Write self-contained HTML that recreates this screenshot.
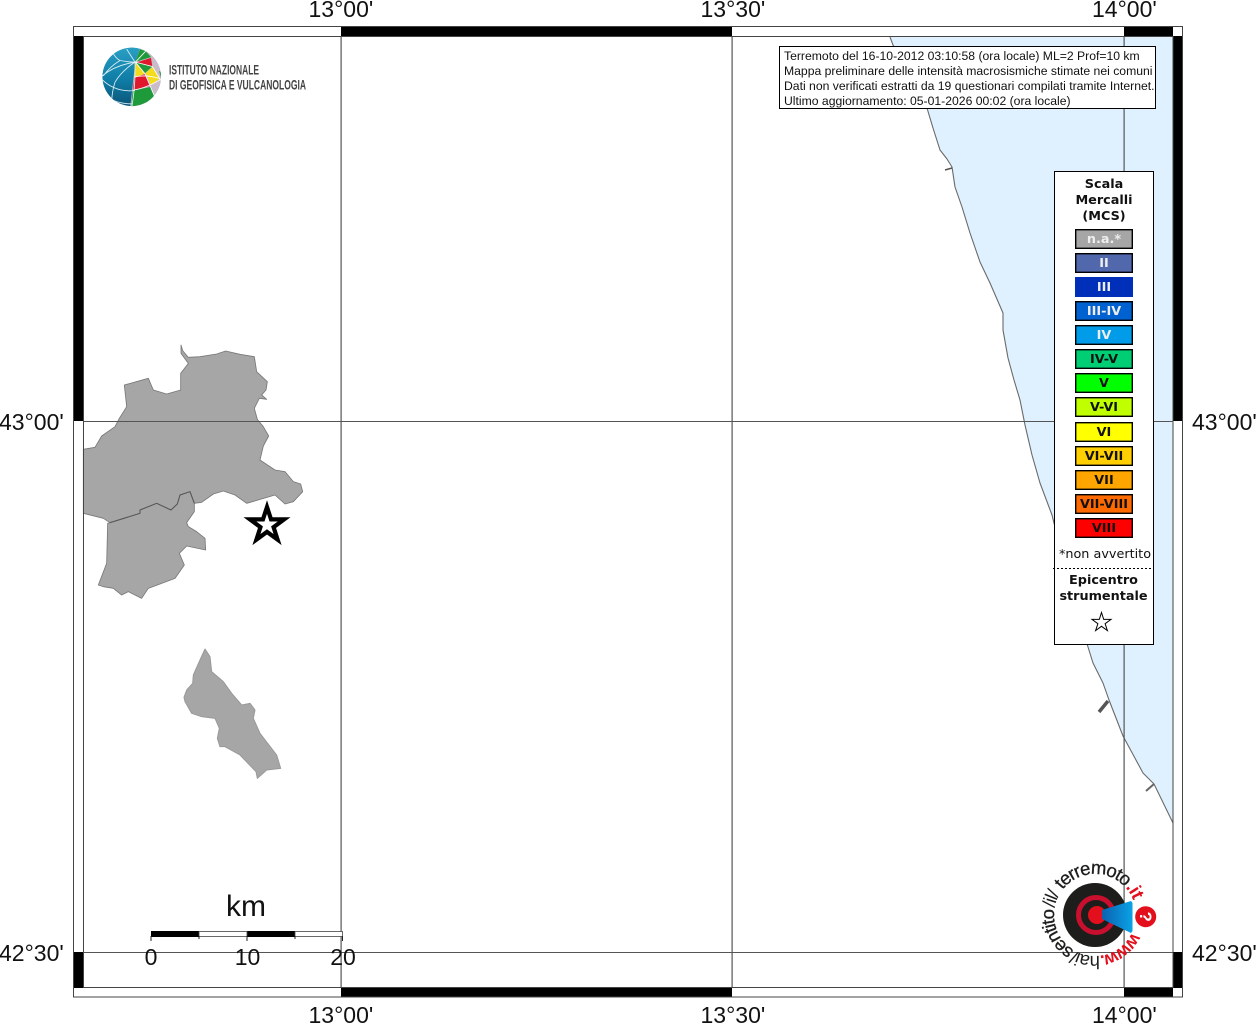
<!DOCTYPE html>
<html><head><meta charset="utf-8"><style>
html,body{margin:0;padding:0;background:#fff;width:1256px;height:1024px;overflow:hidden}
svg{display:block}
.t{font-family:"Liberation Sans",sans-serif;font-size:23px;fill:#111}
.b{font-family:"Liberation Sans",sans-serif;font-size:12.2px;fill:#111}
.d{font-family:"DejaVu Sans",sans-serif;font-size:12.8px;text-anchor:middle;fill:#111}
.h{font-weight:bold}
.s{font-family:"DejaVu Sans",sans-serif;font-size:12.8px;font-weight:bold;text-anchor:middle}
.l{font-family:"Liberation Sans",sans-serif;font-size:18.5px;letter-spacing:-1px;fill:#1d1d1b}
</style></head><body>
<svg width="1256" height="1024" viewBox="0 0 1256 1024" xmlns="http://www.w3.org/2000/svg">
<defs>
<clipPath id="tb"><rect x="780" y="47" width="375" height="61"/></clipPath>
<clipPath id="gl"><circle cx="110" cy="103" r="88"/></clipPath>
<linearGradient id="bg" x1="0" y1="0" x2="0" y2="1"><stop offset="0" stop-color="#2a9fc4"/><stop offset=".55" stop-color="#0f7da6"/><stop offset="1" stop-color="#0a5578"/></linearGradient>
<linearGradient id="cone" x1="0" y1="0" x2="1" y2="0"><stop offset="0" stop-color="#0a62b0"/><stop offset="1" stop-color="#0aa2e6"/></linearGradient>
<path id="arc" d="M1133.5 929A41 41 0 1 1 1134.6 904.4"/>
</defs>

<!-- sea -->
<polygon fill="#dff1ff" stroke="none" points="890,37 893,45 927,108 933,128 940,150 947,159 952,167 955,187 962,207 970,233 980,262 990,283 1003,313 1003,330 1008,358 1014,380 1020,400 1025,425 1032,455 1040,483 1052,515 1062,555 1075,605 1088,647 1093,663 1103,683 1109,700 1123,736 1143,773 1154,784 1173,823 1173,37"/>
<polyline fill="none" stroke="#6a6a6a" stroke-width="1.1" stroke-linejoin="round" points="890,37 893,45 927,108 933,128 940,150 947,159 952,167 955,187 962,207 970,233 980,262 990,283 1003,313 1003,330 1008,358 1014,380 1020,400 1025,425 1032,455 1040,483 1052,515 1062,555 1075,605 1088,647 1093,663 1103,683 1109,700 1123,736 1143,773 1154,784 1173,823"/>
<path d="M952 168L945 170" stroke="#555" stroke-width="1.5" fill="none"/>
<path d="M1108 701L1099 712" stroke="#555" stroke-width="3.5" fill="none"/>
<path d="M1154 784L1146 791" stroke="#666" stroke-width="2" fill="none"/>

<!-- land -->
<g transform="translate(60 330) scale(.33333)" fill="#a6a6a6" stroke="#777" stroke-width="2.5" stroke-linejoin="round">
<polygon points="363,45 368,62 385,82 420,80 470,72 497,63 540,73 583,80 590,125 622,155 618,180 605,195 620,208 598,205 583,235 592,268 610,290 626,318 610,348 600,390 645,420 675,425 700,455 722,462 728,485 700,515 675,522 645,495 560,520 525,495 490,483 460,492 425,517 403,520 390,485 360,495 352,522 333,540 290,520 240,540 240,550 150,578 130,565 70,550 70,358 105,352 125,318 165,290 178,265 200,230 193,165 265,145 280,180 320,192 362,180 362,130 385,100 363,70"/>
<polygon points="403,520 390,485 360,495 352,522 333,540 290,520 240,540 240,550 150,578 143,580 140,700 115,765 130,770 160,775 185,795 205,785 245,805 265,775 345,745 373,705 358,670 380,648 437,660 435,625 410,605 385,590 380,578 403,545"/>
<polyline fill="none" stroke="#555" stroke-width="3" points="403,520 390,485 360,495 352,522 333,540 290,520 240,540 240,550 150,578"/>
</g>
<g transform="translate(160 640) scale(.33333)" fill="#a6a6a6" stroke="#999" stroke-width="3" stroke-linejoin="round">
<polygon points="135,27 150,50 155,95 190,125 215,160 245,195 270,190 285,210 280,235 300,280 350,345 362,385 320,390 292,415 288,395 240,345 195,320 180,320 172,295 178,265 165,235 125,230 95,220 75,185 72,172 80,150 98,130 100,105 120,60"/>
</g>

<!-- grid -->
<g fill="#555">
<rect x="340.5" y="36" width="1.2" height="951"/>
<rect x="731.5" y="36" width="1.2" height="951"/>
<rect x="1123.5" y="36" width="1.2" height="951"/>
<rect x="83" y="421" width="1090" height="1"/>
<rect x="83" y="952" width="1090" height="1"/>
</g>

<!-- frame -->
<g fill="#000">
<rect x="341" y="27" width="391" height="9"/>
<rect x="1124" y="27" width="49" height="9"/>
<rect x="341" y="988" width="391" height="9"/>
<rect x="1124" y="988" width="49" height="9"/>
<rect x="74" y="36" width="9" height="385"/>
<rect x="74" y="952" width="9" height="36"/>
<rect x="1173" y="36" width="10" height="385"/>
<rect x="1173" y="952" width="10" height="36"/>
</g>
<g fill="none" stroke="#444" stroke-width="1">
<rect x="73.5" y="26.5" width="1109" height="970.5"/>
<rect x="83.5" y="36.5" width="1089.5" height="951"/>
</g>

<!-- tick labels -->
<text class="t" x="308.5" y="17">13°00'</text>
<text class="t" x="700.5" y="17">13°30'</text>
<text class="t" x="1092" y="17">14°00'</text>
<text class="t" x="308.5" y="1023">13°00'</text>
<text class="t" x="700.5" y="1023">13°30'</text>
<text class="t" x="1092" y="1023">14°00'</text>
<text class="t" x="-1" y="430">43°00'</text>
<text class="t" x="-1" y="961">42°30'</text>
<text class="t" x="1192" y="430">43°00'</text>
<text class="t" x="1192" y="961">42°30'</text>

<!-- star -->
<polygon fill="#fff" stroke="#000" stroke-width="4.2" stroke-miterlimit="10" points="267,507 271.05,519.4 284.1,519.4 273.56,527.13 277.6,539.6 267,531.9 256.4,539.6 260.44,527.13 249.9,519.4 262.95,519.4"/>

<!-- scale -->
<text x="226" y="916" font-family="Liberation Sans,sans-serif" font-size="30" fill="#111">km</text>
<rect x="151" y="931" width="48" height="6" fill="#000"/>
<rect x="247" y="931" width="48" height="6" fill="#000"/>
<rect x="199" y="931.5" width="48" height="5" fill="#fff" stroke="#444" stroke-width=".8"/>
<rect x="295" y="931.5" width="47.5" height="5" fill="#fff" stroke="#444" stroke-width=".8"/>
<path d="M151 936V941M199 936V939M247 936V941M295 936V939M342.5 936V941" stroke="#222" stroke-width="1" fill="none"/>
<g font-family="Liberation Sans,sans-serif" font-size="23" fill="#111" text-anchor="middle">
<text x="151" y="965">0</text><text x="247.5" y="965">10</text><text x="343" y="965">20</text>
</g>

<!-- INGV logo -->
<g transform="translate(95 42.5) scale(.33333)">
<g clip-path="url(#gl)">
<circle cx="110" cy="103" r="88" fill="url(#bg)"/>
<polygon points="121,58 135,18 210,18 210,200 105,200 116,102" fill="#c9bccb"/>
<polygon points="121,58 135,20 152,26 168,44" fill="#1f9a3a"/>
<polygon points="124,60 168,46 172,72 152,66" fill="#e0182d"/>
<polygon points="124,60 152,66 172,72 150,92" fill="#1f9a3a"/>
<polygon points="120,60 150,94 118,104" fill="#f3dc1a"/>
<polygon points="152,92 172,74 194,108 168,128" fill="#f3dc1a"/>
<polygon points="118,105 150,95 167,130 114,142" fill="#e0182d"/>
<polygon points="113,144 167,133 178,160 165,178 108,200" fill="#1f9a3a"/>
<polygon points="178,160 188,150 182,178" fill="#e0182d"/>
<polygon points="192,85 200,90 198,105" fill="#1f9a3a"/>
<g fill="none" stroke="#d8eef5" stroke-width="2.6">
<path d="M95 20L120 59M22 100Q60 68 120 59M52 28Q62 48 75 54Q95 58 120 59M75 54Q45 72 25 100"/>
<path d="M120 59Q80 85 60 119Q50 150 50 182M120 59Q122 130 110 196"/>
<path d="M20 110Q60 150 120 144M35 164Q70 185 112 184"/>
</g>
<g fill="none" stroke="#fff" stroke-width="2.4">
<path d="M121 59L152 26M121 59L172 72L200 118M121 59L150 94L178 160M118 104Q150 95 194 108M114 143Q150 138 198 110"/>
</g>
</g>
</g>
<g font-family="Liberation Sans,sans-serif" font-size="13.5" font-weight="bold" fill="#444">
<text x="169" y="74.5" textLength="90" lengthAdjust="spacingAndGlyphs">ISTITUTO NAZIONALE</text>
<text x="169" y="89.5" textLength="137" lengthAdjust="spacingAndGlyphs">DI GEOFISICA E VULCANOLOGIA</text>
</g>

<!-- info box -->
<rect x="779.5" y="46.5" width="376" height="62" fill="#fff" stroke="#000" stroke-width="1"/>
<g clip-path="url(#tb)">
<text class="b" x="784" y="60">Terremoto del 16-10-2012 03:10:58 (ora locale) ML=2 Prof=10 km</text>
<text class="b" x="784" y="75">Mappa preliminare delle intensità macrosismiche stimate nei comuni</text>
<text class="b" x="784" y="90">Dati non verificati estratti da 19 questionari compilati tramite Internet.</text>
<text class="b" x="784" y="105">Ultimo aggiornamento: 05-01-2026 00:02 (ora locale)</text>
</g>

<!-- legend -->
<rect x="1054.5" y="171.5" width="99" height="473" fill="#fff" stroke="#000" stroke-width="1"/>
<text class="d h" x="1104" y="188">Scala</text>
<text class="d h" x="1104" y="204">Mercalli</text>
<text class="d h" x="1104" y="220">(MCS)</text>
<g stroke="#000" stroke-width="1.4">
<rect x="1075.7" y="229.7" width="56.6" height="18.6" fill="#a6a6a6"/>
<rect x="1075.7" y="253.7" width="56.6" height="18.6" fill="#5268ad"/>
<rect x="1075" y="277" width="58" height="20" fill="#0030ba" stroke="none"/>
<rect x="1075.7" y="301.7" width="56.6" height="18.6" fill="#0062d0"/>
<rect x="1075.7" y="325.7" width="56.6" height="18.6" fill="#009cea"/>
<rect x="1075.7" y="349.7" width="56.6" height="18.6" fill="#00ce74"/>
<rect x="1075.7" y="373.7" width="56.6" height="18.6" fill="#00ff00"/>
<rect x="1075.7" y="397.7" width="56.6" height="18.6" fill="#bfff00"/>
<rect x="1075.7" y="422.7" width="56.6" height="18.6" fill="#ffff00"/>
<rect x="1075.7" y="446.7" width="56.6" height="18.6" fill="#ffcf00"/>
<rect x="1075.7" y="470.7" width="56.6" height="18.6" fill="#ffa500"/>
<rect x="1075.7" y="494.7" width="56.6" height="18.6" fill="#ff6a00"/>
<rect x="1075.7" y="518.7" width="56.6" height="18.6" fill="#ff0000"/>
</g>
<text class="s" fill="#eee" x="1104" y="243">n.a.*</text>
<text class="s" fill="#eee" x="1104" y="267">II</text>
<text class="s" fill="#eee" x="1104" y="291">III</text>
<text class="s" fill="#eee" x="1104" y="315">III-IV</text>
<text class="s" fill="#eee" x="1104" y="339">IV</text>
<text class="s" fill="#111" x="1104" y="363">IV-V</text>
<text class="s" fill="#111" x="1104" y="387">V</text>
<text class="s" fill="#111" x="1104" y="411">V-VI</text>
<text class="s" fill="#111" x="1104" y="436">VI</text>
<text class="s" fill="#111" x="1104" y="460">VI-VII</text>
<text class="s" fill="#111" x="1104" y="484">VII</text>
<text class="s" fill="#111" x="1104" y="508">VII-VIII</text>
<text class="s" fill="#111" x="1104" y="532">VIII</text>
<text class="d" x="1105" y="558">*non avvertito</text>
<path d="M1053 568.5H1152" stroke="#000" stroke-width="1" stroke-dasharray="2 2" fill="none"/>
<text class="d h" x="1103.5" y="584">Epicentro</text>
<text class="d h" x="1103.5" y="600">strumentale</text>
<polygon fill="#fff" stroke="#000" stroke-width="1" points="1101.5,612.5 1103.7,619.4 1111,619.4 1105.1,623.7 1107.4,630.6 1101.5,626.3 1095.6,630.6 1097.9,623.7 1092,619.4 1099.3,619.4"/>

<!-- hai sentito logo -->
<circle cx="1095" cy="915" r="32" fill="#1d1d1b"/>
<circle cx="1096" cy="915" r="17.5" fill="none" stroke="#c8102e" stroke-width="5"/>
<circle cx="1097" cy="915" r="9" fill="#e30f1c"/>
<polygon points="1102,910 1131,901 1132.5,903 1132.5,931 1131,933 1102,919" fill="url(#cone)"/>
<circle cx="1145.7" cy="916.7" r="10.5" fill="#e30f1c"/>
<text transform="translate(1140 916.7) rotate(90)" font-family="Liberation Sans,sans-serif" font-size="17" font-weight="bold" fill="#fff" text-anchor="middle">?</text>
<text font-family="Liberation Sans,sans-serif" font-size="18" font-weight="bold" fill="#e30f1c" letter-spacing="-1.5"><textPath href="#arc" startOffset="3.6">www.</textPath></text>
<text class="l"><textPath href="#arc" startOffset="45">hai</textPath></text>
<text class="l"><textPath href="#arc" startOffset="66.5">/</textPath></text>
<text class="l" stroke="#1d1d1b" stroke-width=".3"><textPath href="#arc" startOffset="71.5">sentito</textPath></text>
<text class="l"><textPath href="#arc" startOffset="121">/il/</textPath></text>
<text class="l" stroke="#1d1d1b" stroke-width=".3"><textPath href="#arc" startOffset="141">terremoto</textPath></text>
<text font-family="Liberation Sans,sans-serif" font-size="18.5" font-weight="bold" fill="#e30f1c" letter-spacing="-.5"><textPath href="#arc" startOffset="212.5">.it</textPath></text>
</svg>
</body></html>
